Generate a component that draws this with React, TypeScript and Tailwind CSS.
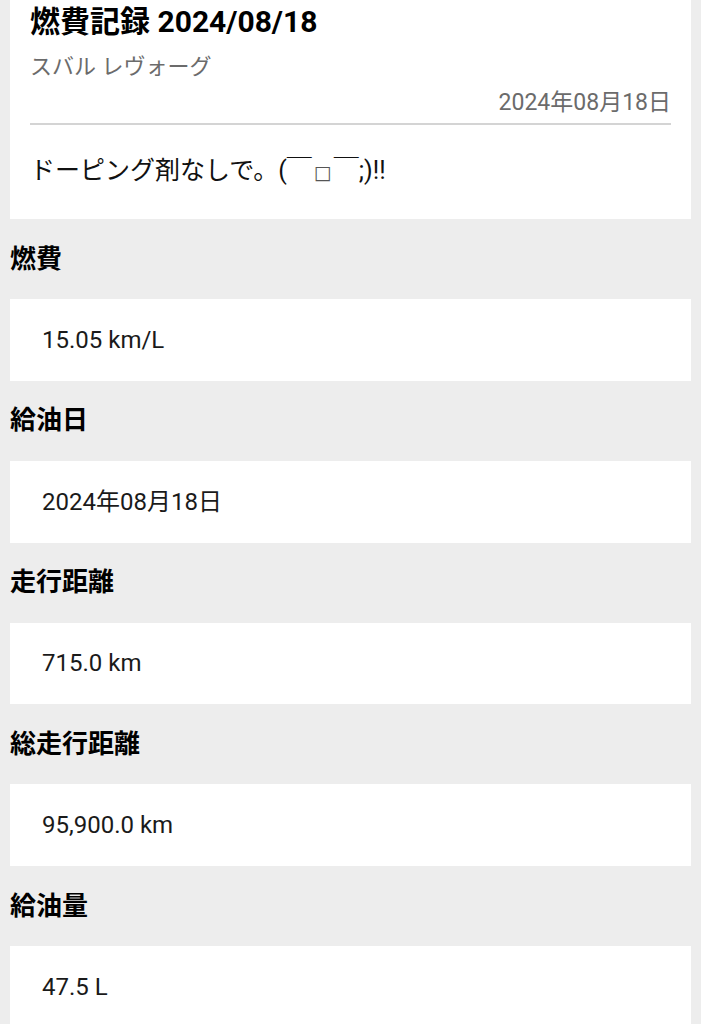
const font = "font-['Roboto','Noto_Sans_CJK_JP',sans-serif]";

type Row = { label: string; value: string };

const rows: Row[] = [
  { label: "燃費", value: "15.05 km/L" },
  { label: "給油日", value: "2024年08月18日" },
  { label: "走行距離", value: "715.0 km" },
  { label: "総走行距離", value: "95,900.0 km" },
  { label: "給油量", value: "47.5 L" },
];

export default function App() {
  return (
    <div className={`min-h-[1024px] w-full bg-[#ededed] px-[10px] ${font}`}>
      {/* Header card */}
      <div className="flex flex-col bg-white px-[20px] pt-[2px] pb-[30px]">
        <h1 className="text-[30px] font-bold leading-[40px] text-black">
          燃費記録 2024/08/18
        </h1>
        <p className="mt-[10px] text-[22px] leading-[30px] text-[#6b6b6b]">
          スバル レヴォーグ
        </p>
        <p className="mt-[6px] text-right text-[23px] leading-[30px] text-[#6b6b6b]">
          2024年08月18日
        </p>
        <div className="mt-[5px] h-[2px] bg-[#d4d4d4]" />
        <p className="mt-[28px] h-[36px] text-[25px] leading-[36px] text-[#111]">
          ドーピング剤なしで。(￣
          <span className="inline-block w-[22px] text-center font-['DejaVu_Sans',sans-serif] text-[19px] leading-none text-[#555]">
            □
          </span>
          ￣;)!!
        </p>
      </div>

      {rows.map((row) => (
        <section key={row.label}>
          <div className="flex h-[80px] items-center text-[26px] font-bold text-black">
            {row.label}
          </div>
          <div className="flex h-[81.75px] items-center bg-white pl-[32px] text-[24px] text-[#1a1a1a]">
            {row.value}
          </div>
        </section>
      ))}
    </div>
  );
}
